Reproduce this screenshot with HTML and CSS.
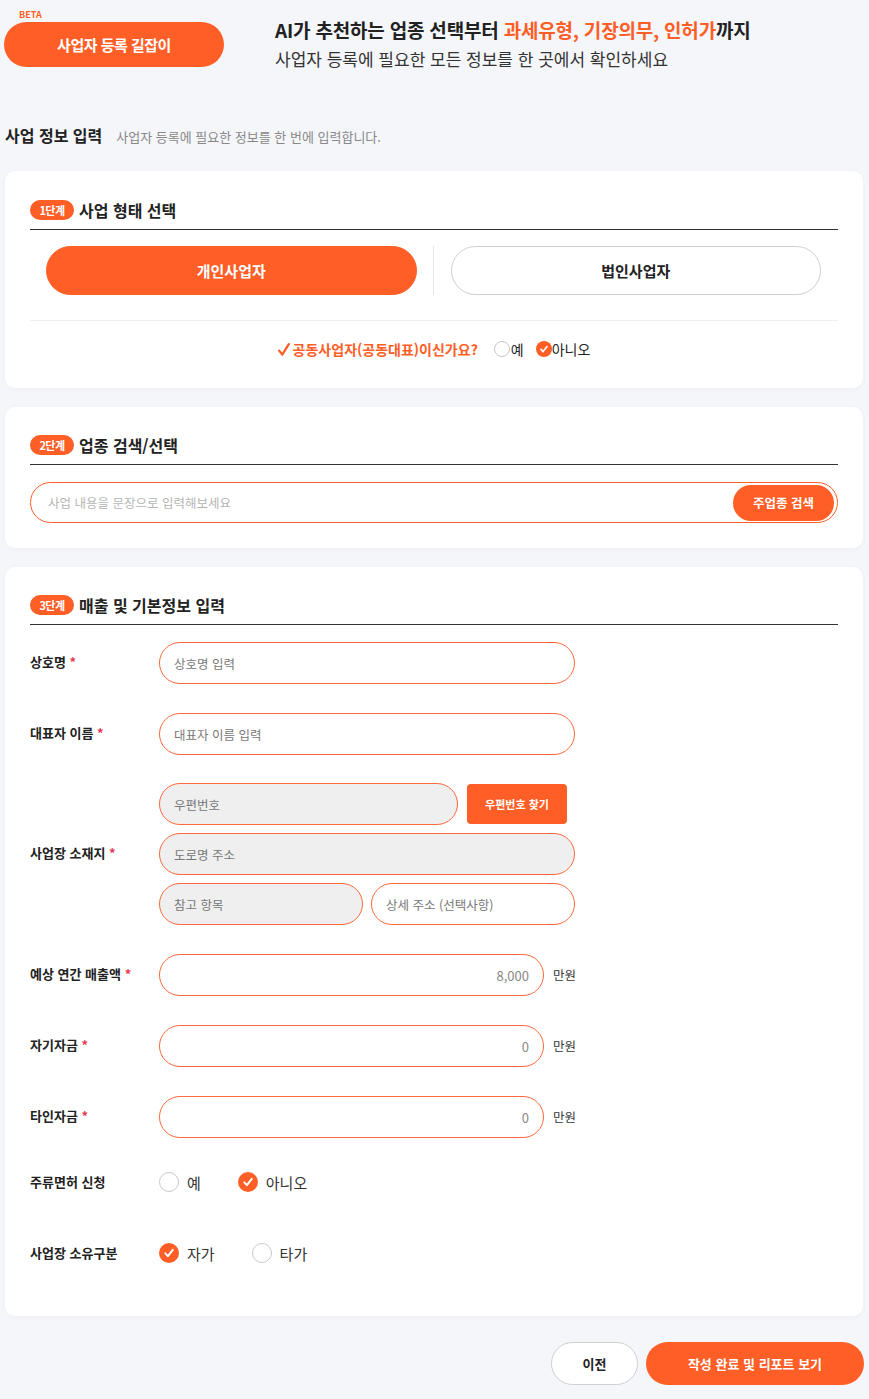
FILE: index.html
```html
<!DOCTYPE html>
<html lang="ko">
<head>
<meta charset="utf-8">
<title>사업자 등록 길잡이</title>
<link rel="stylesheet" href="styles.css">
</head>
<body>
<div class="page">
  <header class="top">
    <div class="brand">
      <div class="beta">BETA</div>
      <div class="brand-btn">사업자 등록 길잡이</div>
    </div>
    <div class="tagline">
      <div class="tag1">AI가 추천하는 업종 선택부터 <span class="accent">과세유형, 기장의무, 인허가</span>까지</div>
      <div class="tag2">사업자 등록에 필요한 모든 정보를 한 곳에서 확인하세요</div>
    </div>
  </header>

  <div class="section-title">
    <h1>사업 정보 입력</h1>
    <p>사업자 등록에 필요한 정보를 한 번에 입력합니다.</p>
  </div>

  <main class="cards">
    <section class="card card1">
      <div class="step-head"><span class="badge">1단계</span><h2>사업 형태 선택</h2></div>
      <div class="type-row">
        <button class="type-btn active">개인사업자</button>
        <span class="vdiv"></span>
        <button class="type-btn">법인사업자</button>
      </div>
      <div class="hr"></div>
      <div class="question">
        <svg class="qcheck" width="12" height="13" viewBox="0 0 12 13"><path d="M1.2 7.6 L4.3 11.6 L10.8 1.2" fill="none" stroke="#ff5e26" stroke-width="2.3" stroke-linecap="round" stroke-linejoin="round"/></svg>
        <span class="qtext">공동사업자(공동대표)이신가요?</span>
        <span class="sopt"><span class="sradio"></span>예</span>
        <span class="sopt"><svg class="sradio-on" width="16" height="16" viewBox="0 0 16 16"><circle cx="8" cy="8" r="8" fill="#ff5e26"/><path d="M5 8.4 L7.1 10.6 L11 5.6" fill="none" stroke="#fff" stroke-width="1.6" stroke-linecap="round" stroke-linejoin="round"/></svg>아니오</span>
      </div>
    </section>

    <section class="card card2">
      <div class="step-head"><span class="badge">2단계</span><h2>업종 검색/선택</h2></div>
      <div class="search">
        <input class="search-input" type="text" placeholder="사업 내용을 문장으로 입력해보세요">
        <button class="search-btn">주업종 검색</button>
      </div>
    </section>

    <section class="card card3">
      <div class="step-head"><span class="badge">3단계</span><h2>매출 및 기본정보 입력</h2></div>
      <div class="form">
        <div class="row">
          <label class="lbl">상호명 <span class="req">*</span></label>
          <input class="field w-full" type="text" placeholder="상호명 입력">
        </div>
        <div class="row">
          <label class="lbl">대표자 이름 <span class="req">*</span></label>
          <input class="field w-full" type="text" placeholder="대표자 이름 입력">
        </div>
        <div class="row addr-row">
          <label class="lbl">사업장 소재지 <span class="req">*</span></label>
          <div class="addr">
            <div class="addr-line">
              <input class="field ro w-zip" type="text" placeholder="우편번호" readonly>
              <button class="zip-btn">우편번호 찾기</button>
            </div>
            <input class="field ro w-full" type="text" placeholder="도로명 주소" readonly>
            <div class="addr-line">
              <input class="field ro w-half" type="text" placeholder="참고 항목" readonly>
              <input class="field w-half" type="text" placeholder="상세 주소 (선택사항)">
            </div>
          </div>
        </div>
        <div class="row">
          <label class="lbl">예상 연간 매출액 <span class="req">*</span></label>
          <input class="field num" type="text" value="8,000">
          <span class="unit">만원</span>
        </div>
        <div class="row">
          <label class="lbl">자기자금 <span class="req">*</span></label>
          <input class="field num" type="text" value="0">
          <span class="unit">만원</span>
        </div>
        <div class="row">
          <label class="lbl">타인자금 <span class="req">*</span></label>
          <input class="field num" type="text" value="0">
          <span class="unit">만원</span>
        </div>
        <div class="row radio-row first-radio">
          <label class="lbl">주류면허 신청</label>
          <span class="opt"><span class="radio"></span>예</span>
          <span class="opt"><svg class="radio-on" width="20" height="20" viewBox="0 0 20 20"><circle cx="10" cy="10" r="10" fill="#ff5e26"/><path d="M6.3 10.4 L8.9 13.1 L13.8 6.8" fill="none" stroke="#fff" stroke-width="2" stroke-linecap="round" stroke-linejoin="round"/></svg>아니오</span>
        </div>
        <div class="row radio-row">
          <label class="lbl">사업장 소유구분</label>
          <span class="opt"><svg class="radio-on" width="20" height="20" viewBox="0 0 20 20"><circle cx="10" cy="10" r="10" fill="#ff5e26"/><path d="M6.3 10.4 L8.9 13.1 L13.8 6.8" fill="none" stroke="#fff" stroke-width="2" stroke-linecap="round" stroke-linejoin="round"/></svg>자가</span>
          <span class="opt"><span class="radio"></span>타가</span>
        </div>
      </div>
    </section>
  </main>

  <div class="actions">
    <button class="btn-prev">이전</button>
    <button class="btn-done">작성 완료 및 리포트 보기</button>
  </div>
</div>
</body>
</html>
```

FILE: styles.css
```css
* { box-sizing: border-box; }
html, body { margin: 0; padding: 0; }
body {
  background: #f5f6fa;
  font-family: "Noto Sans CJK KR", "Noto Sans", sans-serif;
  color: #222;
}
button, input { font-family: inherit; }
.page { padding: 0 6px 13px 5px; }

/* header */
.top { display: flex; height: 98px; padding-top: 9px; margin-left: -1px; }
.brand { width: 220px; flex-shrink: 0; }
.beta { font-size: 9px; font-weight: 700; color: #ff5e26; line-height: 12px; padding-left: 15px; }
.brand-btn {
  margin-top: 1px; height: 45px; border-radius: 23px; background: #ff5e26; color: #fff;
  font-size: 15px; font-weight: 700; display: flex; align-items: center; justify-content: center;
  letter-spacing: -0.5px;
}
.tagline { margin-left: 51px; padding-top: 6px; }
.tag1 { font-size: 19px; font-weight: 700; line-height: 29px; color: #222; letter-spacing: -0.2px; }
.tag1 .accent { color: #ff5e26; }
.tag2 { font-size: 17px; line-height: 29px; color: #333; }

.section-title { display: flex; align-items: baseline; gap: 14px; margin-top: 26px; height: 22px; }
.section-title h1 { margin: 0; font-size: 16px; font-weight: 700; line-height: 22px; color: #222; }
.section-title p { margin: 0; font-size: 13px; color: #888; line-height: 22px; }

.cards { display: flex; flex-direction: column; gap: 19px; margin-top: 25px; }
.card {
  background: #fff; border-radius: 10px; padding: 28px 25px 28px;
  box-shadow: 0 1px 5px rgba(0, 0, 0, 0.035);
}
.card1 { padding-top: 29px; }
.step-head {
  display: flex; align-items: center; gap: 5px; height: 30px; padding-bottom: 10px;
  border-bottom: 1px solid #333;
}
.badge {
  width: 44px; height: 20px; flex-shrink: 0; border-radius: 10px; background: #ff5e26; color: #fff;
  font-size: 11px; font-weight: 700; display: flex; align-items: center; justify-content: center;
  letter-spacing: -0.5px;
}
.step-head h2 { margin: 0; font-size: 16px; font-weight: 700; line-height: 22px; color: #222; }

.type-row { display: flex; margin-top: 16px; padding: 0 17px 0 16px; }
.type-btn {
  flex: 1; height: 49px; border-radius: 25px; border: 1px solid #cfcfcf; background: #fff;
  font-size: 15px; font-weight: 700; color: #222; cursor: pointer;
}
.type-btn.active { background: #ff5e26; border-color: #ff5e26; color: #fff; }
.vdiv { width: 1px; background: #e6e6e6; margin: 0 17px 0 16px; }

.hr { height: 1px; background: #efefef; margin-top: 25px; }
.question { display: flex; align-items: center; justify-content: center; height: 22px; margin-top: 17px; }
.qcheck { margin-right: 3px; }
.qtext { font-size: 14px; font-weight: 700; color: #ff5e26; margin-right: 16px; }
.sopt { display: flex; align-items: center; font-size: 14px; color: #222; margin-right: 12px; }
.sopt:last-child { margin-right: 0; }
.sradio { width: 16px; height: 16px; border-radius: 50%; border: 1px solid #c8c8c8; margin-right: 1px; background: #fff; }
.sradio-on { margin-right: 0; }

/* search */
.card2 { padding-bottom: 25px; }
.search {
  margin-top: 17px; height: 41px; border: 1px solid #ff5e26; border-radius: 21px;
  display: flex; align-items: center; padding: 0 3px 0 17px;
}
.search-input { flex: 1; border: 0; outline: 0; font-size: 12.5px; color: #222; background: transparent; padding: 0; }
.search-input::placeholder { color: #b5b5b5; }
.search-btn {
  width: 101px; height: 36px; border-radius: 18px; border: 0; background: #ff5e26; color: #fff;
  font-size: 12.5px; font-weight: 700; cursor: pointer;
}

/* form */
.card3 { padding-bottom: 42px; }
.form { display: flex; flex-direction: column; gap: 29px; margin-top: 17px; }
.row { display: flex; align-items: center; min-height: 42px; }
.lbl { width: 129px; flex-shrink: 0; font-size: 13px; font-weight: 700; color: #222; margin-bottom: 4px; }
.req { color: #e5394f; }
.field {
  height: 42px; border: 1px solid #ff6a3a; border-radius: 21px; padding: 0 14px;
  font-size: 12.5px; color: #888; background: #fff; outline: 0;
}
.field::placeholder { color: #777; }
.field.ro { background: #efefef; }
.w-full { width: 416px; }
.w-zip { width: 299px; }
.w-half { width: 204px; }
.num { width: 385px; text-align: right; font-size: 13px; }
.unit { margin-left: 9px; font-size: 12.5px; color: #333; margin-bottom: 2px; }
.addr-row { margin-top: -1px; }
.addr { display: flex; flex-direction: column; gap: 8px; }
.addr-line { display: flex; align-items: center; gap: 8px; }
.zip-btn {
  width: 100px; height: 40px; margin-left: 1px; border: 0; border-radius: 4px; background: #ff5e26; color: #fff;
  font-size: 11px; font-weight: 700; cursor: pointer;
}
.first-radio { margin-top: -6px; }
.radio-row .lbl { margin-bottom: 2px; }
.opt { display: flex; align-items: center; font-size: 15px; color: #333; margin-right: 37px; }
.radio { width: 20px; height: 20px; border-radius: 50%; border: 1px solid #cacaca; background: #fff; margin-right: 8px; }
.radio-on { margin-right: 8px; }

/* actions */
.actions { display: flex; justify-content: flex-end; gap: 8px; margin-top: 26px; margin-right: -1px; }
.btn-prev {
  width: 87px; height: 43px; border-radius: 22px; border: 1px solid #cfcfcf; background: #fff;
  font-size: 13px; font-weight: 700; color: #222;
}
.btn-done {
  width: 218px; height: 43px; border-radius: 22px; border: 0; background: #ff5e26; color: #fff;
  font-size: 13px; font-weight: 700;
}
```
